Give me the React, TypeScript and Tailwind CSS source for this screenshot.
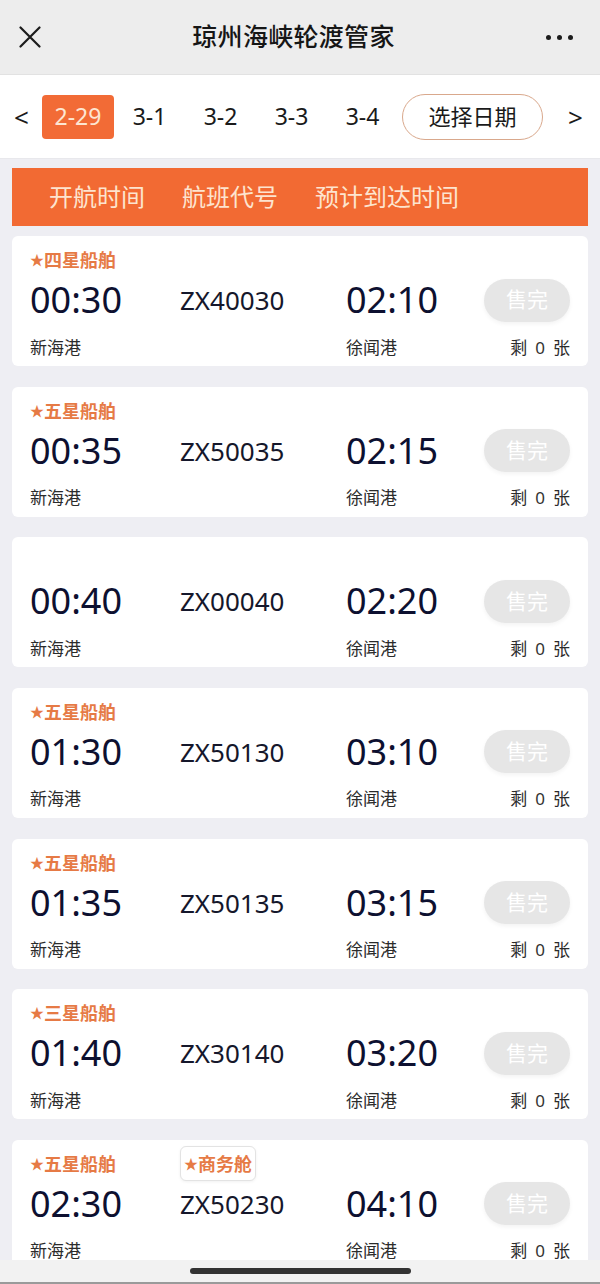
import { Fragment } from "react";

type Sailing = {
  grade?: string;
  cabin?: string;
  dep: string;
  code: string;
  arr: string;
};

const sailings: Sailing[] = [
  { grade: "四星船舶", dep: "00:30", code: "ZX40030", arr: "02:10" },
  { grade: "五星船舶", dep: "00:35", code: "ZX50035", arr: "02:15" },
  { dep: "00:40", code: "ZX00040", arr: "02:20" },
  { grade: "五星船舶", dep: "01:30", code: "ZX50130", arr: "03:10" },
  { grade: "五星船舶", dep: "01:35", code: "ZX50135", arr: "03:15" },
  { grade: "三星船舶", dep: "01:40", code: "ZX30140", arr: "03:20" },
  { grade: "五星船舶", cabin: "商务舱", dep: "02:30", code: "ZX50230", arr: "04:10" },
];

const dates = ["2-29", "3-1", "3-2", "3-3", "3-4"];

const cjk = "font-['Noto_Sans','Noto_Sans_CJK_SC',sans-serif]";

function SailingCard({ s }: { s: Sailing }) {
  return (
    <div className="h-[130px] shrink-0 bg-white rounded-[6px] px-[18px] pt-[10px] flex flex-col">
      {/* badges */}
      <div className="h-[28px] flex items-center">
        {s.grade && (
          <span className="w-[150px] text-[18px] font-bold text-[#e67a45] leading-none">
            <span className="text-[14px] align-[2px]">★</span>
            {s.grade}
          </span>
        )}
        {s.cabin && (
          <span className="h-[35px] px-[3px] flex items-center border border-[#e3e3e3] rounded-[6px] bg-white shadow-[0_1px_3px_rgba(0,0,0,0.06)] text-[18px] font-bold text-[#e67a45] leading-none">
            <span className="text-[14px]">★</span>
            {s.cabin}
          </span>
        )}
      </div>

      {/* times */}
      <div className="h-[52px] flex items-center text-[#0d1030]">
        <span className="w-[150px] text-[36px] leading-none">{s.dep}</span>
        <span className="w-[166px] text-[26px] leading-none text-[#15172b]">{s.code}</span>
        <span className="flex-1 text-[36px] leading-none">{s.arr}</span>
        <span className="w-[86px] h-[43px] rounded-full bg-[#e6e6e6] shadow-[0_2px_4px_rgba(0,0,0,0.05)] flex items-center justify-center text-white text-[21px]">
          售完
        </span>
      </div>

      {/* ports */}
      <div className="mt-[10px] h-[22px] flex items-center text-[17px] text-[#2b2b2b] leading-none">
        <span className="w-[316px]">新海港</span>
        <span className="flex-1">徐闻港</span>
        <span className="flex items-center gap-[8px]">
          <span>剩</span>
          <span className="text-[#333]">0</span>
          <span>张</span>
        </span>
      </div>
    </div>
  );
}

export default function App() {
  return (
    <div className={`h-[1284px] w-[600px] overflow-hidden flex flex-col bg-[#eeeef3] ${cjk}`}>
      {/* Title bar */}
      <div className="h-[75px] shrink-0 bg-[#ededed] flex items-center px-[19px] border-b border-[#e2e2e2]">
        <svg width="22" height="22" viewBox="0 0 22 22" className="shrink-0">
          <path d="M1.5 1.5l19 19M20.5 1.5l-19 19" stroke="#1c1c1c" strokeWidth="2.2" strokeLinecap="round" />
        </svg>
        <div className="flex-1 text-center text-[25px] font-medium text-[#161616] tracking-[0.3px]">
          琼州海峡轮渡管家
        </div>
        <div className="flex items-center gap-[6px] pr-[8px]">
          <span className="w-[5px] h-[5px] rounded-full bg-[#1c1c1c]" />
          <span className="w-[5px] h-[5px] rounded-full bg-[#1c1c1c]" />
          <span className="w-[5px] h-[5px] rounded-full bg-[#1c1c1c]" />
        </div>
      </div>

      {/* Date strip */}
      <div className="h-[84px] shrink-0 bg-white flex items-center pl-[14px] border-b border-[#e8e8ec]">
        <span className="w-[16px] text-[26px] text-[#1a1a1a] leading-none">&lt;</span>
        <div className="ml-[12px] flex items-center">
          {dates.map((d, i) => (
            <Fragment key={d}>
              {i === 0 ? (
                <span className="w-[72px] h-[44px] rounded-[4px] bg-[#f26b36] text-[#fde6d2] text-[23px] flex items-center justify-center">
                  {d}
                </span>
              ) : (
                <span className="w-[71px] text-center text-[23px] text-[#1a1a1a]">{d}</span>
              )}
            </Fragment>
          ))}
        </div>
        <span className="ml-[4px] w-[141px] h-[46px] rounded-full border border-[#d9a88c] flex items-center justify-center text-[22px] text-[#1a1a1a]">
          选择日期
        </span>
        <span className="ml-[25px] text-[26px] text-[#1a1a1a] leading-none">&gt;</span>
      </div>

      {/* Column header */}
      <div className="mx-[12px] mt-[9px] h-[58px] shrink-0 bg-[#f26a33] flex items-center gap-[37px] pl-[37px] text-[24px] text-[#fde4cf]">
        <span>开航时间</span>
        <span>航班代号</span>
        <span>预计到达时间</span>
      </div>

      {/* List */}
      <div className="flex-1 overflow-hidden px-[12px] pt-[10px] flex flex-col gap-[20.67px]">
        {sailings.map((s) => (
          <SailingCard key={s.code} s={s} />
        ))}
      </div>

      {/* Home indicator */}
      <div className="h-[24px] shrink-0 bg-[#f2f2f2] border-b-2 border-[#9a9a9a] flex items-center justify-center">
        <span className="w-[221px] h-[6px] rounded-full bg-[#333]" />
      </div>
    </div>
  );
}
